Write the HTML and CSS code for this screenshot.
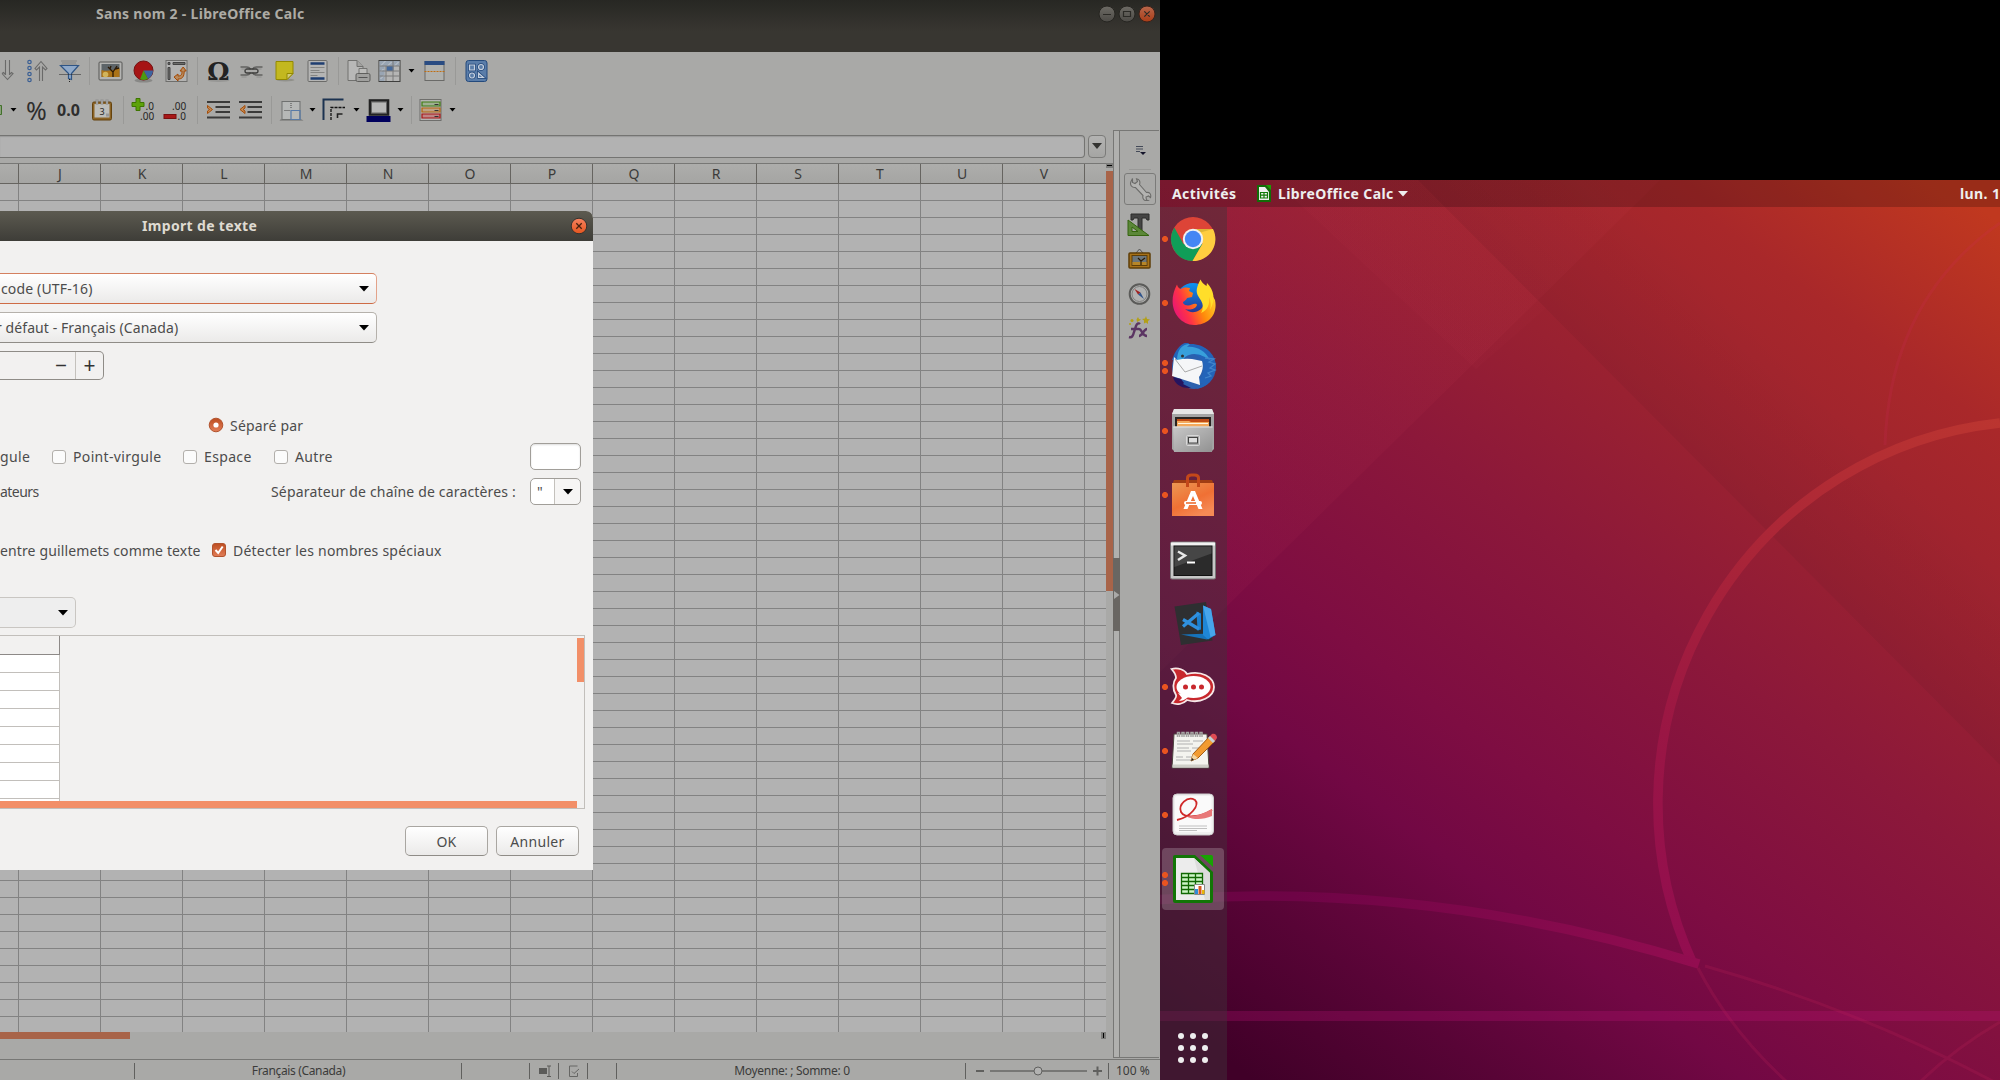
FILE: index.html
```html
<!DOCTYPE html>
<html lang="fr">
<head>
<meta charset="utf-8">
<title>Sans nom 2 - LibreOffice Calc</title>
<link rel="stylesheet" href="styles.css">
</head>
<body>
<div class="screens">
<section class="calc">
  <header class="titlebar">
    <span class="title">Sans nom 2 - LibreOffice Calc</span>
    <svg class="winbtns" width="62" height="20" viewBox="0 0 62 20">
      <defs>
        <linearGradient id="gb" x2="0" y2="1"><stop stop-color="#6d6b65"/><stop offset="1" stop-color="#4c4a46"/></linearGradient>
        <linearGradient id="rb" x2="0" y2="1"><stop stop-color="#b9684c"/><stop offset="1" stop-color="#a93c17"/></linearGradient>
      </defs>
      <circle cx="11" cy="10" r="8" fill="url(#gb)" stroke="#262521"/>
      <circle cx="31" cy="10" r="8" fill="url(#gb)" stroke="#262521"/>
      <circle cx="51" cy="10" r="8" fill="url(#rb)" stroke="#3a221a"/>
      <path d="M7 10.5h8M27.5 7.5h7v5h-7zM48.3 7.3l5.4 5.4M53.700 7.300l-5.4 5.400" fill="none" stroke="#2b2a26" stroke-width="1.2"/>
    </svg>
  </header>

  <div class="toolbar first">
    <svg class="ic w31" viewBox="0 0 24 24"><path d="M10 1v15M14 1v15M6.500 14.500l5.500 6 5.500-6-1.500-1-2 2M6.500 14.500l1.500-1 2 2" class="ln"/></svg>
    <svg class="ic w31" viewBox="0 0 24 24"><g fill="none" stroke="#3a5f94" stroke-width="1.200"><circle cx="3" cy="3" r="1.700"/><circle cx="3" cy="9" r="1.700"/><circle cx="3" cy="15" r="1.700"/><circle cx="3" cy="21" r="1.700"/></g><path d="M13 22V8l-3 3-1.500-1.500L14.500 2.500l6 7L19 11l-3-3v14" class="ln"/></svg>
    <svg class="ic w31" viewBox="0 0 24 24"><path d="M4 2h16M5 4h14M4 6h16" stroke="#7d7d7c" stroke-width="1.500" stroke-dasharray="1 1"/><path d="M3 6.500h18l-7 8v6l-3-1v-5z" fill="#8fa9c9" stroke="#2f5585" stroke-width="1.200"/><path d="M2 15.500h21M12 20v4" stroke="#222" stroke-dasharray="1 1"/></svg>
    <i class="sep w9"></i>
    <svg class="ic" viewBox="0 0 24 24"><rect x=".5" y="3" width="23" height="18" rx="1" fill="#b4b4b2" stroke="#575755"/><rect x="3" y="5" width="18" height="13" fill="#5d6468"/><path d="M3 18v-7c6 2 12 0 18-2v9z" fill="#ab7318"/><circle cx="7" cy="15.500" r="2.800" fill="#d2b45a"/><path d="M14.500 18v-5l-5-5M14.500 13l4-6M11.500 10l1-3M16.500 10l4-1" stroke="#2a1906" stroke-width="1.300" fill="none"/></svg>
    <svg class="ic" viewBox="0 0 24 24"><ellipse cx="12" cy="21.500" rx="9" ry="2" fill="#888886"/><circle cx="12" cy="11.500" r="9.500" fill="#a61414" stroke="#761010"/><path d="M12 11.500h9.500a9.500 9.500 0 0 1-5 8.400z" fill="#3d65a0"/><path d="M12 11.500l4.500 8.400a9.500 9.500 0 0 1-8 .4z" fill="#4b9b12"/></svg>
    <svg class="ic" viewBox="0 0 24 24"><rect x="1.500" y="1.500" width="21" height="21" fill="#b3b3b2" stroke="#6e6e6c"/><path d="M3.500 3.500h2v2h-2zM8.500 3.500h12v2h-12zM3.500 8.500h2v12h-2z" fill="#6c6c6a" stroke="#444"/><path d="M9.500 18l4-3v2c3 0 4-1 4-5h-2l3.200-4 3 4h-2c0 6-2 8-6.200 8v2z" fill="#b88a5c" stroke="#a54a05"/></svg>
    <i class="sep w9"></i>
    <svg class="ic" viewBox="0 0 24 24"><ellipse cx="12" cy="21.500" rx="11" ry="1.500" fill="#979795"/><text x="12" y="21" text-anchor="middle" class="omega">Ω</text></svg>
    <svg class="ic" viewBox="0 0 24 24"><g fill="none"><path d="M1 8h6q3 0 4 2.500M1 16h6q3 0 4-2.500M23 8h-6q-3 0-4 2.500M23 16h-6q-3 0-4-2.500" stroke="#626260" stroke-width="1.600"/><rect x="5.500" y="10" width="13" height="4" rx="2" stroke="#3e3e3d" stroke-width="1.300"/><path d="M2 10h4M18 10h4M2 18h5M17 18h5" stroke="#8f8f8d"/></g></svg>
    <svg class="ic" viewBox="0 0 24 24"><ellipse cx="13" cy="21" rx="9" ry="1.500" fill="#90908a"/><path d="M3.500 2.500h17v12l-6 6h-11z" fill="#c3b81f" stroke="#938900"/><path d="M14.500 20.500v-6h6z" fill="#d3cc76" stroke="#938900"/></svg>
    <svg class="ic" viewBox="0 0 24 24"><rect x="2.500" y="1.500" width="19" height="21" rx="1" fill="#b5b5b4" stroke="#6b6b69"/><path d="M5 4.500h14M5 19.500h14" stroke="#1f3e70" stroke-width="2.500"/><path d="M5 8.500h14M5 11.500h9M5 13.500h14M5 16.500h7" stroke="#858583"/></svg>
    <i class="sep w9"></i>
    <svg class="ic w31" viewBox="0 0 24 24"><path d="M1.500 1.500h9l6 6v14h-15z" fill="#b8b8b7" stroke="#70706e"/><path d="M10.500 1.500v6h6" fill="#a2a2a0" stroke="#70706e"/><path d="M12.500 9.500h8v6h-8z" fill="#bcbcba" stroke="#747472"/><rect x="9.500" y="14.500" width="14" height="8" rx="1.500" fill="#a0a09e" stroke="#5f5f5d"/><path d="M12 18.500h9" stroke="#555"/></svg>
    <svg class="ic w31" viewBox="0 0 24 24"><rect x="1.500" y="1.500" width="21" height="21" fill="#b5b5b4" stroke="#3e3e3d"/><path d="M2 2h20v5H7v15H2z" fill="#99a5b3"/><path d="M3 7l5-5M10 7l4-4M17 7l4-4M3 13l3-3M3 20l4-4" stroke="#c4cad2"/><rect x="9" y="7" width="7" height="5" fill="#45699c"/><path d="M2 7h20M2 12h20M2 17h20M8.500 7v15M15.500 2v20" stroke="#7b7b7a" fill="none"/></svg>
    <svg class="ar w13" viewBox="0 0 6 4"><path d="M0 0h6L3 3.500z"/></svg>
    <svg class="ic" viewBox="0 0 24 24"><rect x="2.500" y="2.500" width="19" height="19" fill="#b0b1ae" stroke="#6a6a68"/><path d="M2 2h20v4H2z" fill="#2a4c82"/><path d="M2 12.500h20" stroke="#c06e12" stroke-dasharray="2 1"/></svg>
    <i class="sep w9"></i>
    <svg class="ic" viewBox="0 0 24 24"><rect x="1.500" y="1.500" width="21" height="21" rx="2.500" fill="#5a7da9" stroke="#244a7c"/><g fill="none" stroke="#1e4376" stroke-width="2.600"><path d="M5 6h5v5H5zM14 14v4.500h5z"/><circle cx="16.500" cy="8" r="2.500"/><circle cx="7.500" cy="16.500" r="2.500"/></g><g fill="#5a7da9" stroke="#c5d0de" stroke-width="1.200"><path d="M5 6h5v5H5zM14 14v4.500h5z"/><circle cx="16.500" cy="8" r="2.500"/><circle cx="7.500" cy="16.500" r="2.500"/></g></svg>
  </div>

  <div class="toolbar">
    <svg class="ic w7" viewBox="0 0 7 24"><path d="M-2 7.500h3.500v9H-2z" fill="#88a078" stroke="#41702a"/></svg>
    <svg class="ar w13" viewBox="0 0 6 4"><path d="M0 0h6L3 3.500z"/></svg>
    <span class="sym pct">%</span>
    <span class="sym num">0.0</span>
    <svg class="ic" viewBox="0 0 24 24"><rect x="2" y="4" width="19" height="18" rx="1.500" fill="#8b6325" stroke="#65430e"/><rect x="4" y="6" width="15" height="13.500" fill="#bdbdb9"/><path d="M6.500 1.500v5M11.500 1.500v5M16.500 1.500v5" stroke="#777" stroke-width="2.500"/><path d="M6.500 1.500v5M11.500 1.500v5M16.500 1.500v5" stroke="#c5c5c3"/><text x="11.500" y="16.500" text-anchor="middle" class="s9">3</text><rect x="15.500" y="15.500" width="3" height="3" fill="#999"/></svg>
    <i class="sep w9"></i>
    <svg class="ic w31" viewBox="0 0 24 24"><path d="M4.500 .500h4v4h4v4h-4v4h-4v-4h-4v-4h4z" fill="#5da20a" stroke="#3e7500"/><text x="14" y="12" class="s9 dec">.0</text><text x="8.500" y="22" class="s9 dec">.00</text></svg>
    <svg class="ic" viewBox="0 0 24 24"><rect x=".5" y="16.500" width="12" height="4" fill="#a81818" stroke="#7a1010"/><text x="8.500" y="12" class="s9 dec">.00</text><text x="14" y="22" class="s9 dec">.0</text></svg>
    <i class="sep w11"></i>
    <svg class="ic w31" viewBox="0 0 24 24"><path d="M.500 4h23M9 9h14.500M9 14h14.500M.500 19.500h23" stroke="#3b3b3a" stroke-width="2"/><path d="M1 7.500l5 4-5 4v-2.500l2-1.500-2-1.500z" fill="#c58a52" stroke="#a54d08"/></svg>
    <svg class="ic" viewBox="0 0 24 24"><path d="M.500 4h23M9 9h14.500M9 14h14.500M.500 19.500h23" stroke="#3b3b3a" stroke-width="2"/><path d="M6.500 7.500l-5 4 5 4v-2.500l-2-1.500 2-1.500z" fill="#c58a52" stroke="#a54d08"/></svg>
    <i class="sep w9"></i>
    <svg class="ic w31" viewBox="0 0 24 24"><path d="M1 21h21l2 2H0z" fill="#8b8b89"/><rect x="2.500" y="3.500" width="18" height="18" fill="#b6b8b7" stroke="#6f7170"/><path d="M5 12.500h6M11.500 5v6" stroke="#444" stroke-dasharray="1 1"/><path d="M11.500 21.500v-9h9v9z" fill="none" stroke="#577aa8" stroke-width="1.200"/></svg>
    <svg class="ar w11" viewBox="0 0 6 4"><path d="M0 0h6L3 3.500z"/></svg>
    <svg class="ic" viewBox="0 0 24 24"><defs><linearGradient id="fd" x2="1" y2="1"><stop stop-color="#1b3250"/><stop offset=".5" stop-color="#1b3250"/><stop offset="1" stop-color="#a9a9a7"/></linearGradient></defs><path d="M1 22V1.500h20" fill="none" stroke="url(#fd)" stroke-width="2"/><path d="M8.500 22V9.500h14" fill="none" stroke="#111" stroke-width="1.300" stroke-dasharray="3 1"/><path d="M15 20v-4h5" fill="none" stroke="#222" stroke-width="1.600"/></svg>
    <svg class="ar w11" viewBox="0 0 6 4"><path d="M0 0h6L3 3.500z"/></svg>
    <svg class="ic" viewBox="0 0 24 24"><rect x="3.500" y="2.500" width="18" height="14" fill="#b8b8b7" stroke="#222" stroke-width="2.600"/><rect x="5" y="4" width="15" height="11" fill="none" stroke="#666"/><path d="M0 18h24v6H0z" fill="#00005c"/></svg>
    <svg class="ar w11" viewBox="0 0 6 4"><path d="M0 0h6L3 3.500z"/></svg>
    <i class="sep w11"></i>
    <svg class="ic w27" viewBox="0 0 24 24"><rect x="1.500" y="1.500" width="21" height="21" fill="#b5b5b4" stroke="#6e6e6c"/><g stroke-width="1.200"><path d="M3.500 4h18v4h-18z" fill="#9fb092" stroke="#3f7d12"/><path d="M3.500 10h18v4h-18z" fill="#c0a184" stroke="#b2650d"/><path d="M3.500 16h18v4h-18z" fill="#bf8484" stroke="#a81414"/></g><path d="M16 6.500h4M16 12.500h4M16 18.500h4" stroke="#333"/></svg>
    <svg class="ar w17" viewBox="0 0 6 4"><path d="M0 0h6L3 3.500z"/></svg>
  </div>

  <div class="work">
    <div class="sheetcol">
      <div class="formula"><div class="finput"></div><div class="fdrop"><svg width="10" height="6" viewBox="0 0 10 6"><path d="M0 0h10L5 6z" fill="#333331"/></svg></div></div>
      <div class="sheetrow">
        <div class="sheet">
          <div class="cols"><b class="lead"></b><b>J</b><b>K</b><b>L</b><b>M</b><b>N</b><b>O</b><b>P</b><b>Q</b><b>R</b><b>S</b><b>T</b><b>U</b><b>V</b></div>
          <div class="cells"></div>
        </div>
        <div class="vbar"><i class="vknob"></i><i class="vthumb"></i></div>
      </div>
      <div class="hbar"><i class="hthumb"></i><i class="hknob"></i></div>
    </div>
    <div class="splitter"><i class="grip"><svg width="6" height="8" viewBox="0 0 6 8"><path d="M0 0l5.500 4L0 8z" fill="#a9a9a7"/></svg></i></div>
    <aside class="side">
      <svg class="smenu" width="12" height="12" viewBox="0 0 12 12"><path d="M2 1.500h7M2 4h7M2 6.500h4" stroke="#444a58"/><path d="M6 7h6L9 10z" fill="#14142a"/></svg>
      <i class="sline"></i>
      <div class="sbtn on"><svg width="24" height="24" viewBox="0 0 24 24"><path d="M4.500 1.500v4l2.500 1 2.500-2-1-2.700c3 .2 4 3 3 5.700l7 8c3-.5 5 1.500 4 5l-2-1.500-2.500 1 .5 3 1.500.5c-3.500 1-6-1.500-5-5l-7.500-8c-3.500.5-6-2.500-4.500-6z" fill="#b3b3b1" stroke="#6b6b69" stroke-width="1.100"/></svg></div>
      <svg class="sic" width="24" height="24" viewBox="0 0 24 24"><path d="M4 1h18v6h-2l-1-2h-4v14l2 2h-6V5H7L6 7H4z" fill="#454544" stroke="#2c2c2b"/><path d="M1 7v15.500h21z" fill="#5b8738" stroke="#35650f"/><path d="M5 14v4.500h6z" fill="#a7a9a3" stroke="#35650f"/></svg>
      <svg class="sic" width="24" height="24" viewBox="0 0 24 24"><path d="M9 5l3.500-4L16 5" fill="none" stroke="#555"/><rect x="2" y="5" width="21" height="15" rx="1" fill="#a87218" stroke="#5e3e08" stroke-width="1.500"/><rect x="5" y="7.500" width="15" height="10" fill="#6b757a" stroke="#5e3e08"/><path d="M5.500 14h14v3h-14z" fill="#b78628"/><path d="M14 17v-4l-3-3M14 13l4-3" stroke="#2b1b06" stroke-width="1.200" fill="none"/></svg>
      <svg class="sic" width="24" height="24" viewBox="0 0 24 24"><circle cx="12.500" cy="12" r="9.800" fill="#b2b2b1" stroke="#5b5b59" stroke-width="2"/><circle cx="12.500" cy="12" r="7.500" fill="none" stroke="#80807e"/><path d="M7.500 7l6 3.500-2.500 2z" fill="#a02020"/><path d="M17 17l-6-4.500 2.500-2z" fill="#32568c"/></svg>
      <svg class="sic fx" width="24" height="24" viewBox="0 0 24 24"><path d="M2 22c3 1 4-1 5-5l2-6c1-3 3-3 4-2M4 14h8M12 14c3 0 3 7 8 7M20 14c-3 0-5 7-8 7" fill="none" stroke="#5b3563" stroke-width="2.400"/><path d="M11 2l1 2 2 .5-2 1.500-2 1-.5-2.500zM19 1l1 3 3 .5-2 1.500v3l-2-1.500-2 1v-3l-2-1.500 3-.500z" fill="#b3a018"/><circle cx="5" cy="5.500" r="1.500" fill="#b3a018"/><circle cx="3" cy="9" r="1" fill="#b3a018"/></svg>
    </aside>
  </div>

  <footer class="status">
    <span class="sb s1"></span>
    <span class="sb s2">Français (Canada)</span>
    <span class="sb s3"></span>
    <span class="sb s4"><svg width="14" height="12" viewBox="0 0 14 12"><path d="M1 3h8v6H1z" fill="#5b5b59"/><path d="M9 1h4M9 11.500h4M11 1v10" stroke="#5b5b59"/></svg></span>
    <span class="sb s5"><svg width="12" height="12" viewBox="0 0 12 12"><path d="M9.500 1h-8v10.500h8V8M4 6.500l2 2L11 4" fill="none" stroke="#666664"/></svg></span>
    <span class="sb s6"></span>
    <span class="sb s7">Moyenne: ; Somme: 0</span>
    <span class="sb s8"><svg width="128" height="12" viewBox="0 0 128 12"><path d="M0 6h8M117 6h9M121.500 1.500v9" stroke="#60605e" stroke-width="2"/><path d="M14 6h97" stroke="#777775" stroke-width="2"/><circle cx="62" cy="6" r="4" fill="#b2b2b1" stroke="#60605e"/></svg></span>
    <span class="s9b">100 %</span>
  </footer>

  <div class="dialog">
    <header class="dtitle"><span>Import de texte</span>
      <svg class="dclose" width="18" height="18" viewBox="0 0 18 18"><defs><linearGradient id="cb" x2="0" y2="1"><stop stop-color="#f58260"/><stop offset="1" stop-color="#e5551e"/></linearGradient></defs><circle cx="9" cy="9" r="7.800" fill="url(#cb)" stroke="#33322e"/><path d="M6.300 6.300l5.400 5.400M11.700 6.300l-5.400 5.400" stroke="#47200f" stroke-width="1.300"/></svg></header>
    <div class="combo hot"><span class="t1">code (UTF-16)</span><svg class="ca" viewBox="0 0 10 6"><path d="M0 0h10L5 5.500z"/></svg></div>
    <div class="combo second"><span class="t2">r défaut - Français (Canada)</span><svg class="ca" viewBox="0 0 10 6"><path d="M0 0h10L5 5.500z"/></svg></div>
    <div class="spin"><span>−</span><span class="plus">+</span></div>
    <div class="line r1"><svg class="radio" width="16" height="16" viewBox="0 0 16 16"><defs><linearGradient id="ro" x2="0" y2="1"><stop stop-color="#bd4d20"/><stop offset="1" stop-color="#e27e58"/></linearGradient></defs><circle cx="8" cy="8" r="6.800" fill="url(#ro)" stroke="#b2532e"/><circle cx="8" cy="8" r="2.600" fill="#fff"/></svg><span class="t3">Séparé par</span></div>
    <div class="line r2"><span class="c0">gule</span><i class="box"></i><span class="c1">Point-virgule</span><i class="box"></i><span class="c2">Espace</span><i class="box"></i><span class="c3">Autre</span><i class="other"></i></div>
    <div class="line r3"><span class="q0">ateurs</span><span class="q1">Séparateur de chaîne de caractères :</span><div class="quote"><span>"</span><svg class="ca" viewBox="0 0 10 6"><path d="M0 0h10L5 5.500z"/></svg></div></div>
    <div class="line r4"><span class="p0">entre guillemets comme texte</span><svg class="tick" width="16" height="16" viewBox="0 0 16 16"><rect x="1.500" y="1.500" width="13" height="13" rx="2.500" fill="url(#ro)" stroke="#b2532e"/><path d="M4.500 8l2.700 3 4.500-6.500" fill="none" stroke="#fff" stroke-width="2"/></svg><span class="p1">Détecter les nombres spéciaux</span></div>
    <div class="combo third"><svg class="ca" viewBox="0 0 10 6"><path d="M0 0h10L5 5.500z"/></svg></div>
    <div class="preview">
      <div class="ptop"><div class="ptable"><div class="phead"></div><div class="prows"></div></div><i class="pv"></i></div>
      <i class="ph"></i>
    </div>
    <div class="actions"><button>OK</button><button>Annuler</button></div>
  </div>
</section>

<section class="shell">
  <svg class="wall" width="840" height="900" viewBox="0 0 840 900">
    <defs>
      <linearGradient id="bg" gradientUnits="userSpaceOnUse" x1="67" y1="880" x2="747" y2="-27">
        <stop offset="0" stop-color="#400028"/><stop offset=".13" stop-color="#580436"/><stop offset=".26" stop-color="#720844"/><stop offset=".36" stop-color="#7e0d42"/><stop offset=".54" stop-color="#8c183a"/><stop offset=".68" stop-color="#992131"/><stop offset=".85" stop-color="#a9282a"/><stop offset="1" stop-color="#c0381f"/>
      </linearGradient>
      <linearGradient id="l1" gradientUnits="userSpaceOnUse" x1="237" y1="260" x2="60" y2="80"><stop stop-color="#f05068" stop-opacity=".05"/><stop offset="1" stop-color="#f05068" stop-opacity=".06"/></linearGradient>
      <linearGradient id="l2" gradientUnits="userSpaceOnUse" x1="560" y1="310" x2="660" y2="210"><stop stop-opacity=".05"/><stop offset="1" stop-opacity="0"/></linearGradient>
      <linearGradient id="l3" gradientUnits="userSpaceOnUse" x1="230" y1="108" x2="330" y2="20"><stop stop-color="#f05068" stop-opacity=".03"/><stop offset="1" stop-color="#f05068" stop-opacity=".015"/></linearGradient>
      <linearGradient id="ring" gradientUnits="userSpaceOnUse" x1="520" y1="780" x2="840" y2="240"><stop stop-color="#920d50"/><stop offset=".3" stop-color="#9a1644"/><stop offset=".6" stop-color="#a92438"/><stop offset="1" stop-color="#bb3530"/></linearGradient>
      <linearGradient id="arc" gradientUnits="userSpaceOnUse" x1="0" y1="0" x2="538" y2="0"><stop stop-color="#680442"/><stop offset=".25" stop-color="#6e0446"/><stop offset="1" stop-color="#920d50"/></linearGradient>
    </defs>
    <path d="M0 0h840v900H0z" fill="url(#bg)"/>
    <path d="M0 0h500L0 492z" fill="url(#l1)"/>
    <path d="M114 0H258L386 128 316 189z" fill="url(#l3)"/>
    <path d="M258 0H840V585z" fill="url(#l2)"/>
    <g fill="none">
      <path d="M0 836h840" stroke="#c0147c" stroke-opacity=".26" stroke-width="10"/>
      <g stroke-width="3" stroke="#d02860" stroke-opacity=".17"><path d="M538 788Q570 850 627 902M545 786Q700 830 840 905M760 902Q795 868 840 842M725 265Q730 120 840 43"/></g>
      <path d="M840 243A383 383 0 0 0 533 784" stroke="url(#ring)" stroke-width="9.500"/>
      <path d="M0 719.600Q269 700.400 539 784" stroke="url(#arc)" stroke-width="9.500"/>
    </g>
  </svg>
  <div class="topbar">
    <span class="act">Activités</span>
    <svg width="14" height="17" viewBox="0 0 14 17"><path d="M0 0h9l5 5v12H0z" fill="#126c08"/><path d="M2 2h6l4 5v8H2z" fill="#f0f0f0"/><path d="M9 0h5v5z" fill="#18a303"/><path d="M3.500 7.500h7v5.500h-7zM3.500 10.200h7M7 7.500V13" fill="none" stroke="#127a08" stroke-width="1.200"/></svg>
    <span class="app">LibreOffice Calc</span>
    <svg width="10" height="6" viewBox="0 0 10 6"><path d="M0 0h10L5 5.500z" fill="#eee"/></svg>
    <span class="clock">lun. 10</span>
  </div>
  <nav class="dock">
    <div class="app-i one"><svg viewBox="0 0 48 48"><circle cx="24" cy="24" r="22" fill="#dd4437"/><path d="M5.300 12.500A22 22 0 0 0 23.500 46L33.500 29 24 24 14.500 29z" fill="#109d58"/><path d="M44 14H24v9l9.600 5.500L23.500 46A22 22 0 0 0 44 14z" fill="#ffcd40"/><path d="M24 14h20l-18 5z" fill="#c9a52f" opacity=".6"/><circle cx="24" cy="24" r="10.200" fill="#f1f1f1"/><circle cx="24" cy="24" r="8.200" fill="#4486f4"/></svg></div>
    <div class="app-i one up"><svg viewBox="0 0 48 48"><defs><linearGradient id="fx" x1="0" x2="1" y1=".7" y2=".3"><stop stop-color="#e5127c"/><stop offset=".3" stop-color="#ff3345"/><stop offset=".6" stop-color="#ff8a0a"/><stop offset="1" stop-color="#ffd32c"/></linearGradient><linearGradient id="fb" x2="0" y2="1"><stop stop-color="#0a95f5"/><stop offset="1" stop-color="#2c2a86"/></linearGradient></defs><circle cx="24" cy="21.500" r="16.500" fill="url(#fb)"/><path d="M8 6.500c.5 2.500 2 4 4 4.500 3-2 6-1.500 9-1l-1 3 4 2-1 4-5 1c-1 3-4 3-4 5 2 3 6 3 9 1.500 2-1 5-1 5 .5-2 5-8 5-12 4 5 5 15 4 18-3 4-9-1-13 0-20 5 4 9 8 12 14 3 14-6 25-21 25C8 46-3 27 8 6.500z" fill="url(#fx)"/><path d="M31.500 1.500C26 12 27 15 31 21c3 4 4 9 1 14 7-3 9-9 8-16 2 4 2 9 1 13 6-10 4-20-3-27l-.5 3c-3-2-5-4-6-6.500z" fill="#ffde2a"/></svg></div>
    <div class="app-i two"><svg viewBox="0 0 48 48"><circle cx="25" cy="24" r="22" fill="#2a60ae"/><path d="M3 17C8 1 19-3 20 1c14-1 25 8 27 22-2 14-8 21-20 23l7-6-6 1 5-8c2-6 2-12 0-17C23 8 12 9 8 18z" fill="#2364b9"/><path d="M8 18c0-10 4-17 13-17l-3 3c10-1 18 4 23 13-6-4-14-8-21-5-4 1-6 4-8 9z" fill="#38a0db"/><path d="M5 14l3 3q8-2 15-1l10 2c2 6 0 12-3 16l1 8L3 33z" fill="#f5f6f8"/><path d="M6 16l10 13 17-6" fill="none" stroke="#aaa"/><path d="M4 34l8 2 3 4-1 1 8 4C12 46 5 40 4 34z" fill="#25145f"/><circle cx="13.500" cy="13" r="1.500" fill="#333"/><path d="M36 15l9 1-5 3 6 2-5 4 5 2-7 3 3 3-6 2" fill="none" stroke="#4186cc" stroke-width="1.300"/></svg></div>
    <div class="app-i one"><svg viewBox="0 0 48 48"><defs><linearGradient id="fg" x2="1" y2="1"><stop stop-color="#c8c8c8"/><stop offset="1" stop-color="#919191"/></linearGradient></defs><path d="M5 2h38l2 5v35l-2 2H5l-2-2V7z" fill="#a5a5a5"/><path d="M5 2h38l2 5H3z" fill="#e6e6e6"/><path d="M6 10h36v10H6z" fill="#292422"/><path d="M8 12h32v7H8z" fill="#c04c16"/><path d="M8 14h12l2 1h18v5H8z" fill="#f4a95c"/><path d="M9 16.500h30" stroke="#fff6e0"/><path d="M4 19.500h40L43 45H5z" fill="url(#fg)"/><path d="M4.500 20h39" stroke="#e6e6e6"/><rect x="17.500" y="28.500" width="13" height="10" rx="1" fill="#aaa" stroke="#d8d8d8"/><rect x="19.500" y="30.500" width="9" height="5.500" fill="#ddd" stroke="#444"/></svg></div>
    <div class="app-i one"><svg viewBox="0 0 48 48"><defs><linearGradient id="so" x2=".6" y2="1"><stop stop-color="#eb9753"/><stop offset=".6" stop-color="#f07034"/><stop offset="1" stop-color="#f58a55"/></linearGradient></defs><path d="M5 9h38l2 5H3z" fill="#a13d13"/><path d="M3 12h42v33H3z" fill="url(#so)"/><path d="M18.500 16V7q0-3 4-3h3q4 0 4 3v9" fill="none" stroke="#c4481a" stroke-width="3"/><path d="M22 20h4l7.500 18h-4l-5.500-13-5.500 13h-4z" fill="#fff"/><rect x="15" y="30" width="18" height="4" rx="2" fill="#fff"/><path d="M17 32h10" stroke="#eb6426" stroke-width="1.500"/></svg></div>
    <div class="app-i down"><svg viewBox="0 0 48 48"><rect x="1.500" y="5" width="45" height="37" rx="1.500" fill="#c6c6c6" stroke="#777"/><path d="M2 5.500h44v3H2z" fill="#f2f2f2"/><rect x="5" y="9" width="38" height="29.500" fill="#2b2b2b" stroke="#111"/><path d="M5.500 9.500h37v7L5.500 30z" fill="#464646"/><path d="M9 14.500l7 4-7 4.500" fill="none" stroke="#e8e8e8" stroke-width="2.500"/><path d="M18 25.500h8" stroke="#fff" stroke-width="2"/></svg></div>
    <div class="app-i"><svg viewBox="0 0 48 48"><path d="M5.500 7.500L37 3l6.500 38.500L12 46z" fill="#2e2f31"/><path d="M12 35.500l31-1-5 6z" fill="#1673ba"/><path d="M34 6.500l8 3.500 4.500 26-7.500 4.500L34 36z" fill="#1f86d6"/><path d="M34 6.500l8 3.500 4.500 26-5 2z" fill="#47a5ea"/><path d="M27.500 12.500l4.500 2v16l-3.500 1z" fill="#1b80cf"/><path d="M14 20.500l16 9.500M14 27.500L30 14" fill="none" stroke="#2f90de" stroke-width="3.200"/></svg></div>
    <div class="app-i one"><svg viewBox="0 0 48 48"><path d="M2.500 6C9 4 16 7 18 11c14-4 27 3 27 13S31 41 18 37c-4 4-10 5-15 3 3-4 5-6 4-8-4-6-3-13 0-17 0-4-2-6-4.500-9z" fill="#c8282d" stroke="#f6e8e8" stroke-width="1.800"/><ellipse cx="24.500" cy="24" rx="17" ry="11" fill="#fff"/><path d="M9 30l4 5-3 3c5 0 8-3 10-5z" fill="#fff"/><g fill="#c8282d"><circle cx="16.500" cy="24" r="2.500"/><circle cx="24.500" cy="24" r="2.500"/><circle cx="32.500" cy="24" r="2.500"/></g></svg></div>
    <div class="app-i one"><svg viewBox="0 0 48 48"><path d="M5 7h33l2 34H3z" fill="#f4f4ef" stroke="#4d4540"/><path d="M3.500 37.500h36v3h-36z" fill="#cfcfc8"/><path d="M8 14h13M24 14h10M8 17h16M8 21h12M23 21h8M8 24h14M7 30h7M17 30h6M7 33h15" stroke="#b0b0b0"/><g fill="none" stroke="#a5a5a2" stroke-width="1.500"><path d="M8.500 10V5.500h2V10M13 10V5.500h2V10M17.500 10V5.500h2V10M22 10V5.500h2V10M26.500 10V5.500h2V10M31 10V5.500h2V10"/></g><path d="M22 34l2-7L41 9l5 5-17 17z" fill="#f29b31" stroke="#a45c14"/><path d="M41 9l2-2c3-1 5 1 5 4l-2 3z" fill="#df4b54"/><path d="M40 10l5 5" stroke="#c5d0d8" stroke-width="3"/><path d="M22 34l2-7 5 4z" fill="#f4d6a0"/><path d="M22 34l1-3 2 1.700z" fill="#222"/></svg></div>
    <div class="app-i one"><svg viewBox="0 0 48 48"><rect x="4" y="3" width="40.500" height="41" rx="4" fill="#efefef" stroke="#ccc"/><rect x="6" y="5" width="36.500" height="36" rx="2" fill="#fafafa"/><path d="M8 29C22 26 31 14 26 9 18 4.500 9 14 12 21c4 7 20 5 31-2" fill="none" stroke="#d02a2a" stroke-width="1.800"/><path d="M17 25.500c10 0 18-3 26-7.500v7c-9 4-18 4-26 .500z" fill="#e87878"/><path d="M10 35h28M10 37.500h28M10 39.500h18" stroke="#c0c0c0"/></svg></div>
    <div class="app-i two cur"><svg viewBox="0 0 48 48"><path d="M6 0h20l18 17v29q0 2-2 2H6q-2 0-2-2V2q0-2 2-2z" fill="#127506"/><path d="M7 3h18l16 15v27H7z" fill="#ececec"/><path d="M25 3l16 15v27H36z" fill="#dcdcdc"/><path d="M31 0h11q2 0 2 2v10z" fill="#18a303"/><path d="M12.500 18.500h21v20h-21z" fill="#ccf4c6" stroke="#106802" stroke-width="1.300"/><path d="M12.500 22.500h21M12.500 26.500h21M12.500 30.500h21M12.500 34.500h21M19.500 18v20M26.500 18v20" stroke="#106802" stroke-width="1.300"/><path d="M25.500 29.500h10v10h-10z" fill="#fff" stroke="#888"/><path d="M26 34h3v5h-3z" fill="#2f8bd8"/><path d="M29.500 31h3v8h-3z" fill="#d6581c"/><path d="M33 35h2.500v4H33z" fill="#e8b60a"/></svg></div>
    <svg class="apps" width="32" height="32" viewBox="0 0 32 32"><g fill="#eee"><circle cx="4" cy="4" r="3"/><circle cx="16" cy="4" r="3"/><circle cx="28" cy="4" r="3"/><circle cx="4" cy="16" r="3"/><circle cx="16" cy="16" r="3"/><circle cx="28" cy="16" r="3"/><circle cx="4" cy="28" r="3"/><circle cx="16" cy="28" r="3"/><circle cx="28" cy="28" r="3"/></g></svg>
  </nav>
</section>
</div>
</body>
</html>
```
FILE: styles.css
```css
* { box-sizing: border-box; }
body { margin: 0; background: #000; font-family: "Noto Sans", "Open Sans", sans-serif; overflow: hidden; }
.screens { display: flex; width: 2000px; height: 1080px; overflow: hidden; }
svg { display: block; flex: none; }

/* spreadsheet window */
.calc { position: relative; width: 1160px; height: 1080px; flex: none; overflow: hidden; background: #a9a9a7; display: flex; flex-direction: column; color: #3b3b3a; }
.titlebar { height: 52px; flex: none; display: flex; justify-content: space-between; background: linear-gradient(#272723, #383631 60%, #383631); padding: 4px 2px 0 96px; color: #adaba5; font-weight: 700; font-size: 14px; line-height: 20px; white-space: nowrap; }
.title { letter-spacing: 0.29px; }

.toolbar { height: 38px; flex: none; display: flex; align-items: center; margin-top: 1px; }
.toolbar.first { margin: 0 0 0 -8px; }
.ic { width: 33px; height: 24px; overflow: visible; }
.w7 { width: 7px; } .w9 { width: 9px; } .w11 { width: 11px; } .w13 { width: 13px; }
.w17 { width: 17px; } .w27 { width: 27px; } .w31 { width: 31px; }
.ar { height: 4px; }
.sep { height: 28px; flex: none; background: linear-gradient(#999997, #999997) center / 1px 100% no-repeat; }
.ln { fill: none; stroke: #6a6a69; stroke-width: 1.1; }
.omega { font: 700 25px "DejaVu Serif", serif; fill: #222; }
.s9 { font: 9px "Noto Sans", sans-serif; fill: #262625; }
.dec { font-size: 10px; }
.sym { width: 33px; text-align: center; line-height: 24px; flex: none; color: #2e2e2d; }
.pct { font-size: 25px; }
.num { font-size: 16px; font-weight: 700; padding-right: 2px; }

.work { display: flex; height: 928px; margin-top: 1px; }
.sheetcol { width: 1113px; flex: none; display: flex; flex-direction: column; padding-top: 5px; }
.formula { display: flex; height: 23px; gap: 3px; }
.finput { width: 1085px; border: 1px solid #747472; border-left: 0; border-radius: 0 4px 4px 0; background: #b2b2b2; box-shadow: inset 0 1px 1px #9a9a99; }
.fdrop { width: 18px; border: 1px solid #7b7b79; border-radius: 4px; background: linear-gradient(#b3b3b2, #a5a5a3); display: flex; align-items: center; justify-content: center; padding-bottom: 2px; }
.sheetrow { display: flex; height: 869px; margin-top: 5px; }
.sheet { width: 1106px; flex: none; }
.cols { height: 21px; display: flex; overflow: hidden; border-top: 1px solid #777775; border-bottom: 1px solid #666460; background: linear-gradient(#adadab, #a5a5a3); }
.cols b { width: 82px; flex: none; border-right: 1px solid #666460; padding-left: 1px; font-weight: 400; font-size: 14px; line-height: 20px; text-align: center; }
.cols .lead { width: 19px; }
.cells { height: 848px; background: linear-gradient(90deg, transparent 81px, #828282 81px) -63px 0 / 82px 17px, linear-gradient(transparent 16px, #828282 16px) 0 0 / 82px 17px, #b2b2b2; }
.vbar { width: 7px; }
.vknob { display: block; height: 5px; margin-bottom: 3px; background: linear-gradient(#000, #000) center / 5px 1px no-repeat #7d7d7b; }
.vthumb { display: block; height: 420px; background: #a86449; }
.hbar { height: 7px; display: flex; justify-content: space-between; padding-right: 7px; }
.hthumb { width: 130px; background: #a86449; }
.hknob { width: 5px; background: linear-gradient(#000, #000) center / 1px 5px no-repeat #7d7d7b; }
.splitter { width: 7px; flex: none; border: 1px solid #777775; background: #b0b0ae; display: flex; justify-content: center; align-items: flex-start; padding-top: 427px; }
.grip { width: 7px; height: 73px; flex: none; background: #696662; display: flex; align-items: center; justify-content: center; }
.side { width: 39px; border-top: 1px solid #777775; border-bottom: 1px solid #777775; display: flex; flex-direction: column; align-items: center; padding-top: 14px; }
.sline { width: 22px; height: 1px; background: #999997; margin-top: 12px; }
.sbtn { width: 32px; height: 32px; margin-top: 3px; border: 1px solid #7b7b79; border-radius: 3px; display: flex; align-items: center; justify-content: center; }
.sic { margin: 10.5px 1px 0 0; }
.sbtn + .sic { margin-top: 8px; }
.sic.fx { margin-top: 9px; }

.status { height: 21px; margin-top: 1px; border-top: 1px solid #777775; display: flex; align-items: center; flex: none; font-size: 12px; line-height: 20px; white-space: nowrap; padding-top: 1px; }
.sb { height: 16px; border-right: 1px solid #60605e; display: flex; align-items: center; justify-content: center; }
.s1 { width: 135px; } .s2 { width: 327px; padding-left: 1px; letter-spacing: -0.35px; } .s3 { width: 68px; } .s4 { width: 29px; padding-left: 2px; } .s5 { width: 29px; padding-left: 2px; }
.s6 { width: 29px; } .s7 { width: 349px; padding-left: 2px; letter-spacing: -0.3px; } .s8 { width: 143px; padding-left: 5px; }
.s9b { padding-left: 7px; }

/* import dialog, above the sheet */
.dialog { position: absolute; left: 0; top: 211px; width: 593px; height: 659px; background: #f2f1f0; border-radius: 0 7px 0 0; color: #4c4c4c; font-size: 14px; display: flex; flex-direction: column; align-items: flex-start; }
.dialog span { white-space: nowrap; }
.dtitle { width: 100%; height: 30px; flex: none; border-radius: 0 7px 0 0; background: linear-gradient(#5c5a50, #3e3d38); display: flex; align-items: center; justify-content: space-between; padding: 0 5px 0 142px; color: #dfdbd2; font-weight: 700; letter-spacing: 0.33px; }
.dtitle span { padding-bottom: 1px; }
.ca { width: 10px; height: 6px; }
.combo { width: 377px; height: 31px; margin-top: 32px; flex: none; border: 1px solid #b5b1ab; border-bottom-color: #8f8c87; border-left: 0; border-radius: 0 5px 5px 0; background: linear-gradient(#fff, #ebeae9); display: flex; align-items: center; justify-content: space-between; padding: 0 7px 0 1px; overflow: hidden; }
.combo.hot { border-color: #e3a38a; border-top-color: #d4805f; border-bottom-color: #ce6b45; }
.t1 { letter-spacing: 0.15px; }
.combo.second { margin-top: 8px; padding-left: 0; }
.t2 { margin-left: -4px; letter-spacing: 0.08px; }
.spin { width: 104px; height: 29px; margin-top: 8px; flex: none; border: 1px solid #8f8c87; border-left: 0; border-radius: 0 5px 5px 0; display: flex; justify-content: flex-end; font-size: 21px; line-height: 26px; text-align: center; color: #333; }
.spin span { width: 28px; }
.spin .plus { border-left: 1px solid #c4c1bc; }
.line { display: flex; align-items: center; width: 100%; flex: none; }
.r1 { height: 20px; margin-top: 35px; padding-left: 208px; gap: 6px; }
.t3 { letter-spacing: 0.2px; }
.r2 { height: 27px; margin-top: 8px; }
.box { width: 14px; height: 14px; flex: none; border: 1px solid #b2afab; border-radius: 3px; background: #fbfbfb; }
.c0 { width: 52px; letter-spacing: 0.4px; } .c1, .c2, .c3 { padding-left: 7px; letter-spacing: 0.35px; } .c1 { width: 117px; } .c2 { width: 77px; } .c3 { width: 242px; }
.other { width: 51px; height: 27px; border: 1px solid #a19e99; border-radius: 5px; background: #fff; box-shadow: inset 0 1px 2px #ddd; }
.r3 { height: 27px; margin-top: 8px; }
.q0 { width: 271px; letter-spacing: -0.55px; } .q1 { width: 259px; letter-spacing: 0.17px; }
.quote { width: 51px; height: 27px; border: 1px solid #a19e99; border-radius: 5px; background: linear-gradient(90deg, #fff 23px, #c4c1bc 23px, #c4c1bc 24px, #f6f5f4 24px); display: flex; align-items: center; justify-content: space-between; padding: 0 7px 0 6px; }
.quote span { line-height: 20px; }
.r4 { height: 20px; margin-top: 35px; }
.p0 { width: 211px; letter-spacing: 0.13px; } .p1 { padding-left: 6px; letter-spacing: 0.23px; }
.combo.third { width: 76px; margin-top: 37px; justify-content: flex-end; background: #eee; border-color: #c9c6c2; }
.preview { width: 585px; height: 174px; flex: none; margin-top: 7px; border: 1px solid #c2bfbb; border-left: 0; }
.ptop { height: 165px; display: flex; justify-content: space-between; }
.ptable { width: 60px; border-right: 1px solid #c2bfbb; }
.phead { height: 19px; width: 60px; border-right: 1px solid #8d8987; border-bottom: 1px solid #8d8987; }
.prows { height: 146px; background: linear-gradient(transparent 17px, #c2bfbb 17px) 0 0 / 60px 18px, #fff; }
.pv { width: 7px; height: 44px; margin-top: 2px; background: #f28f68; }
.ph { display: block; width: 577px; height: 7px; background: #f28f68; }
.actions { display: flex; gap: 8px; margin: 17px 0 0 405px; }
.actions button { width: 83px; height: 30px; padding: 0; border: 1px solid #a9a6a1; border-bottom-color: #8f8c87; border-radius: 5px; background: linear-gradient(#fff, #ebeae9); font: 14px "Noto Sans", sans-serif; letter-spacing: 0.3px; color: #4c4c4c; }

/* desktop on the second monitor */
.shell { position: relative; width: 840px; height: 900px; flex: none; margin-top: 180px; overflow: hidden; display: flex; flex-direction: column; color: #eee; }
.wall { position: absolute; left: 0; top: 0; }
.topbar { position: relative; height: 27px; flex: none; background: rgba(0, 0, 0, .2); display: flex; align-items: center; padding-left: 12px; font-weight: 700; font-size: 14px; letter-spacing: 0.4px; white-space: nowrap; }
.topbar span { flex: none; }
.act { width: 85px; }
.app { width: 127px; padding-left: 7px; }
.clock { margin-left: 552px; padding-bottom: 1px; }
.dock { position: relative; width: 67px; flex: 1; background: rgba(64, 52, 58, .45); display: flex; flex-direction: column; }
.app-i { width: 62px; height: 62px; margin: 1px 0 1px 2px; flex: none; border-radius: 4px; display: flex; align-items: center; justify-content: center; background-repeat: no-repeat; }
.app-i svg { width: 48px; height: 48px; }
.app-i.one { background-image: radial-gradient(circle at 3px 31px, #e95420 2.6px, transparent 3.4px); }
.app-i.two { background-image: radial-gradient(circle at 3px 27px, #e95420 2.6px, transparent 3.4px), radial-gradient(circle at 3px 35px, #e95420 2.6px, transparent 3.4px); }
.app-i.down { padding-top: 4px; }
.app-i.up { padding-bottom: 2px; }
.app-i.cur { background-color: rgba(255, 255, 255, .2); }
.apps { margin: auto 0 16px 17px; }
```
